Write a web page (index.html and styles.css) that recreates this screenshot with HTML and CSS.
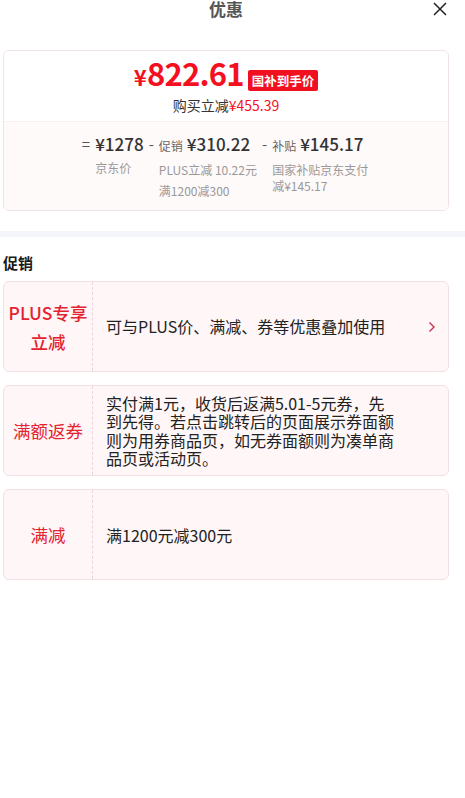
FILE: index.html
```html
<!DOCTYPE html>
<html lang="zh-CN">
<head>
  <meta charset="UTF-8">
  <meta name="viewport" content="width=device-width, initial-scale=1.0">
  <title>优惠</title>
  <link rel="stylesheet" href="styles.css">
</head>
<body>
  <div class="page">
    <header class="topo">
      <span></span>
      <h1 class="titulo">优惠</h1>
      <svg class="fechar" width="16" height="16" viewBox="0 0 16 16">
        <path d="M2 2 L14 14 M14 2 L2 14" stroke="#222" stroke-width="1.5" fill="none"/>
      </svg>
    </header>

    <section class="resumo">
      <div class="resumo-topo">
        <div class="preco-linha">
          <span class="preco"><span class="moeda">¥</span>822.61</span>
          <span class="selo">国补到手价</span>
        </div>
        <div class="desconto">购买立减<span class="vermelho">¥455.39</span></div>
      </div>
      <div class="resumo-base">
        <div class="item">
          <span class="sinal">=</span>
          <div class="coluna">
            <div class="valor">¥1278</div>
            <p class="nota">京东价</p>
          </div>
        </div>
        <div class="item">
          <span class="sinal">-</span>
          <div class="coluna">
            <div class="valor"><span class="rotulo">促销</span>¥310.22</div>
            <p class="nota">PLUS立减 10.22元</p>
            <p class="nota nota-extra">满1200减300</p>
          </div>
        </div>
        <div class="item">
          <span class="sinal">-</span>
          <div class="coluna">
            <div class="valor"><span class="rotulo">补贴</span>¥145.17</div>
            <p class="nota nota-larga">国家补贴京东支付减¥145.17</p>
          </div>
        </div>
      </div>
    </section>

    <div class="faixa"></div>

    <h3 class="secao">促销</h3>

    <div class="promos">
      <div class="promo">
        <div class="promo-tag tag-dupla">PLUS专享<br>立减</div>
        <div class="promo-corpo">
          <p class="promo-texto">可与PLUS价、满减、券等优惠叠加使用</p>
          <svg class="seta" width="8" height="12" viewBox="0 0 8 12">
            <path d="M1.5 1.5 L6 6 L1.5 10.5" stroke="#c8324a" stroke-width="1.4" fill="none"/>
          </svg>
        </div>
      </div>
      <div class="promo">
        <div class="promo-tag">满额返券</div>
        <div class="promo-corpo">
          <p class="promo-texto">实付满1元，收货后返满5.01-5元券，先到先得。若点击跳转后的页面展示券面额则为用券商品页，如无券面额则为凑单商品页或活动页。</p>
        </div>
      </div>
      <div class="promo">
        <div class="promo-tag">满减</div>
        <div class="promo-corpo">
          <p class="promo-texto">满1200元减300元</p>
        </div>
      </div>
    </div>
  </div>
</body>
</html>
```

FILE: styles.css
```css
body {
  margin: 0;
  background: #fff;
  font-family: "Noto Sans CJK SC", "Noto Sans", sans-serif;
  color: #1a1a1a;
}

.page {
  padding: 0 16px 40px 3px;
}

.topo {
  display: grid;
  grid-template-columns: 1fr auto 1fr;
  align-items: start;
  height: 50px;
}

.titulo {
  margin: -1px 0 0 0;
  font-size: 17px;
  line-height: 20px;
  font-weight: bold;
  color: #555;
}

.fechar {
  justify-self: end;
  margin-top: 1px;
  margin-right: 1px;
}

.resumo {
  border: 1px solid #f1e3e5;
  border-radius: 6px;
  overflow: hidden;
}

.resumo-topo {
  padding: 7px 0 5px;
  text-align: center;
  background: #fff;
}

.preco-linha {
  display: flex;
  justify-content: center;
  align-items: flex-end;
  height: 36px;
}

.preco {
  color: #f5101f;
  font-size: 31px;
  font-weight: bold;
  line-height: 36px;
  letter-spacing: -0.8px;
}

.moeda {
  font-size: 22px;
  margin-right: 1px;
}

.selo {
  background: #f0101f;
  color: #fff;
  font-size: 12.5px;
  font-weight: bold;
  line-height: 21px;
  padding: 0 4px;
  border-radius: 2px;
  margin: 0 0 3px 4px;
}

.desconto {
  font-size: 14px;
  line-height: 22px;
  color: #333;
}

.vermelho {
  color: #f5101f;
}

.resumo-base {
  background: #fffafa;
  border-top: 1px solid #fbeff0;
  display: flex;
  justify-content: center;
  gap: 5px;
  padding: 11px 0 11px;
}

.item {
  display: flex;
  gap: 5px;
}

.sinal {
  font-size: 15px;
  line-height: 22px;
  color: #555;
}

.valor {
  font-size: 17px;
  line-height: 22px;
  font-weight: 500;
  color: #333;
  white-space: nowrap;
}

.rotulo {
  font-size: 12px;
  font-weight: normal;
  color: #666;
  margin-right: 4px;
}

.nota {
  margin: 5px 0 0;
  font-size: 12px;
  line-height: 16px;
  color: #999;
  white-space: nowrap;
}

.nota-extra {
  margin-top: 5px;
}

.nota-larga {
  white-space: normal;
  width: 98px;
}

.faixa {
  height: 6px;
  margin: 20px -16px 0 -3px;
  background: #f5f6fb;
}

.secao {
  margin: 16px 0 8px;
  font-size: 15px;
  line-height: 20px;
  font-weight: bold;
  color: #1a1a1a;
}

.promos {
  display: flex;
  flex-direction: column;
  gap: 13px;
}

.promo {
  display: flex;
  min-height: 89px;
  background: #fef6f7;
  border: 1px solid #f3e0e3;
  border-radius: 6px;
}

.promo-tag {
  width: 88px;
  flex-shrink: 0;
  display: flex;
  align-items: center;
  justify-content: center;
  text-align: center;
  border-right: 1px dashed #efd3d8;
  color: #e5222f;
  font-size: 17.5px;
  line-height: 29px;
}

.tag-dupla {
  font-weight: 500;
}

.promo-corpo {
  flex: 1;
  display: flex;
  align-items: center;
  padding: 8px 12px 8px 13px;
}

.promo-texto {
  margin: 0;
  max-width: 290px;
  font-size: 16px;
  line-height: 18.3px;
  color: #222;
}

.seta {
  margin-left: auto;
}
```
